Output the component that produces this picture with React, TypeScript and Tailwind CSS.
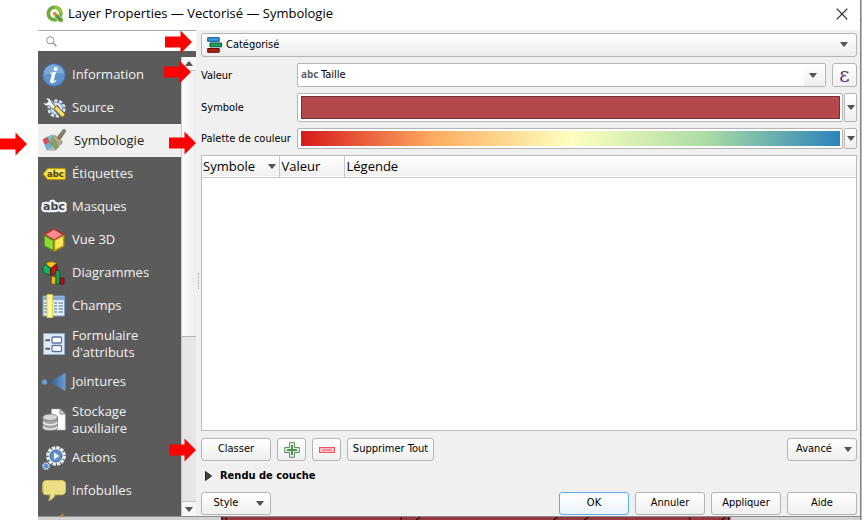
import type { ReactNode } from "react";

const titleFont = "font-['Open_Sans','Noto_Sans',sans-serif]";
const controlFont = "font-['DejaVu_Sans_Condensed','DejaVu_Sans',sans-serif]";
const button =
  "relative flex h-[23px] items-center justify-center rounded-[3px] border border-[#b4b4b4] bg-linear-to-b from-white to-[#efefef] text-[11px] text-black";

function Caret({ className = "" }: { className?: string }) {
  return (
    <svg viewBox="0 0 8 5" className={`pointer-events-none h-[5px] w-2 shrink-0 ${className}`} aria-hidden="true">
      <path d="M0 0h8L4.600 4.600H3.400Z" fill="#555" />
    </svg>
  );
}

function QgisLogo() {
  return (
    <svg viewBox="0 0 18 18" className="h-[18px] w-[18px] shrink-0" aria-hidden="true">
      <circle cx="8.600" cy="8.600" r="6.300" fill="none" stroke="#6fab3b" strokeWidth="3.600" />
      <path d="M8.600 2.300a6.300 6.300 0 0 1 6.300 6.300" fill="none" stroke="#93c23f" strokeWidth="3.600" />
      <path d="m8.500 8.500 3.500.4 5.200 5.400v3h-3.500L8.500 12Z" fill="#5b9f38" stroke="#fff" strokeWidth=".7" />
      <circle cx="8.800" cy="8.800" r="2" fill="#ee8a2d" />
    </svg>
  );
}

const icons: Record<string, ReactNode> = {
  info: (
    <>
      <circle cx="12" cy="12" r="11.200" fill="#5f93cd" stroke="#3d73ae" />
      <path d="M2 12a10 10 0 0 1 20-1c-5-2-12-1-20 1Z" fill="#7fabdb" />
      <circle cx="13.700" cy="5.900" r="2" fill="#fff" />
      <path d="M8.400 10.200c2-.9 3.800-1.100 5.600-1.100l-2.300 8.300c-.2 1 .8.700 2.200-.3l.5.700c-1.700 1.900-3.300 2.500-4.700 2.300-1.500-.2-1.900-1.300-1.500-2.800l1.500-5.500c.2-.7-.3-.9-1.300-.8Z" fill="#fff" />
    </>
  ),
  source: (
    <>
      <circle cx="14.500" cy="12.500" r="7.600" fill="none" stroke="#dfe8f2" strokeWidth="3" strokeDasharray="3.200 1.570" />
      <circle cx="14.500" cy="12.500" r="6.300" fill="#d3e1f1" stroke="#7497c2" />
      <circle cx="14.500" cy="12.500" r="3" fill="#5b5b5b" />
      <path d="M3.500 2.300c3-1.200 6.200.9 6.100 4.200l12 12.300c1 1.200-.8 3.200-2.300 2.100L7 9.700c-2.800 1.200-6-.6-6.100-3.600l3.200 1.200 2.200-2Z" fill="#f4f4f2" stroke="#484848" strokeWidth=".8" />
      <path d="m11.800 12.200 2.800-2.400 8 7.700c1.300 1.600-1.500 4.600-3.200 3.300Z" fill="#f3d34c" stroke="#71602a" />
      <path d="m14.200 12.200 6.700 6.600" stroke="#fff0a0" strokeWidth="1.200" />
    </>
  ),
  brush: (
    <>
      <path d="M.7 10.500 10.300 5.500l3.200 8-8.800 7Z" fill="#d96b78" />
      <path d="m.7 10.500 4.600-2.700 2.300 5-4.800 3.300Z" fill="#cd545e" />
      <path d="m5.300 7.800 5-2.300 2 4.700-4.700 2.600Z" fill="#74c5c0" />
      <path d="m2.800 16.100 4.800-3.300 2.700 4.600-5.600 4.400Z" fill="#6bb0d7" />
      <path d="m7.600 12.800 4.700-2.600 5.400 7.300-4.500 3.700Z" fill="#82bc55" />
      <path d="m10 8.500 8.400 7.300-2.800 4.200c-2.500 2.200-6 2.400-10.400 1.500 2.200-1.500 3.500-3 4.500-5l-3-2.500Z" fill="#8e8872" opacity=".5" />
      <path d="m9.600 8.700 2.800-2.500 7.900 6.500-1.600 3.100Z" fill="#b8ad8c" stroke="#79745f" strokeWidth=".7" />
      <path d="m15.200 8.200 5.700-7.300c1-1.200 3.600.4 2.600 1.900l-5.300 7.600Z" fill="#8b826b" stroke="#696454" strokeWidth=".7" />
    </>
  ),
  label: (
    <>
      <path d="m1 12 4.700-5.600h16.700c.7 0 1 .3 1 1v9.200c0 .7-.3 1-1 1H5.700Z" fill="#f4d93d" stroke="#b89600" />
      <path d="m3 11.500 3.200-3.800H22V11Z" fill="#faea79" />
      <text x="5" y="15" fontFamily="DejaVu Sans" fontWeight="bold" fontSize="8.500" fill="#4c4100">abc</text>
    </>
  ),
  mask: (
    <text x="12" y="15" textAnchor="middle" fontFamily="DejaVu Sans" fontWeight="bold" fontSize="11" fill="#444" stroke="#eef4fc" strokeWidth="4.500" strokeLinejoin="round" paintOrder="stroke">abc</text>
  ),
  cube: (
    <>
      <path d="m12 .8 10 5.800v11.700L12 23.400 2 18.300V6.600Z" fill="#f6df42" stroke="#7d6b17" />
      <path d="m12 1 9.600 5.700L12 12 2.400 6.700Z" fill="#f78b8e" stroke="#b7272c" strokeWidth="1.400" />
      <path d="M2.300 7.400 11.400 12.500v10L2.300 17.800Z" fill="#8fdb35" stroke="#4b9617" strokeWidth="1.200" />
      <path d="m12.600 12.600 9-5v10.300l-9 4.700Z" fill="#fae757" stroke="#b49a16" strokeWidth="1.200" />
    </>
  ),
  chart: (
    <>
      <path d="M9 7 3.800 3.100C5.500.4 11.700-.1 14.500 2.500Z" fill="#fac719" stroke="#7c620c" strokeWidth=".8" />
      <path d="m8.500 7.400-5-4C.5 5.600.2 9.700 2.300 12.300L8.600 14Z" fill="#18ad60" stroke="#096134" />
      <path d="m9 8 5.200-4.700c2.300 4.100.6 8.500-3.100 10.500l-2.500.2Z" fill="#c8161d" stroke="#650a0d" />
      <path d="M9.500 15.700h4.300V23H9.500Z" fill="#fbb61c" stroke="#8a5a00" strokeWidth=".8" />
      <path d="M14 9.600h3.800V23H14Z" fill="#12a85a" stroke="#07562e" strokeWidth=".8" />
      <path d="M18 17.200h4V23h-4Z" fill="#bd1014" stroke="#5d080a" strokeWidth=".8" />
    </>
  ),
  fields: (
    <>
      <path d="M1 2h21.500v20H1Z" fill="#e9eff7" stroke="#7d9ec5" />
      <path d="M1.500 2.500H22v3.700H1.500Z" fill="#83a9d5" />
      <path d="M2 9h3m-3 3h3m-3 3h3m-3 3h3M12 9h3m1.500 0H21m-9 3h3m1.500 0H21m-9 3h3m1.500 0H21m-9 3h3m1.500 0H21" stroke="#789bc3" strokeWidth="1.300" />
      <path d="M5 .7h5.500v22.800H5Z" fill="#fff8a2" stroke="#e3cf38" />
      <circle cx="7.700" cy="4.300" r="1" fill="#fff" stroke="#cfc56c" strokeWidth=".5" />
    </>
  ),
  form: (
    <>
      <path d="M1.500 1.500h21v21h-21Z" fill="#e1e9f3" stroke="#8ba7ca" />
      <path d="M3.300 8.300H8m-4.700 8.500H8" stroke="#49617e" strokeWidth="2" />
      <rect x="10" y="5" width="9.500" height="6" rx="1" fill="#fff" stroke="#5877a0" strokeWidth="1.300" />
      <rect x="10" y="13.500" width="9.500" height="6" rx="1" fill="#fff" stroke="#5877a0" strokeWidth="1.300" />
    </>
  ),
  join: (
    <>
      <defs>
        <linearGradient id="joinFill">
          <stop stopColor="#2f5f93" />
          <stop offset="1" stopColor="#6b9bd0" />
        </linearGradient>
      </defs>
      <circle cx="2.500" cy="12" r="2.600" fill="#6e9dcf" />
      <path d="M8 12 23.500 2.700v18.600Z" fill="url(#joinFill)" />
    </>
  ),
  storage: (
    <>
      <path d="M9.500 1h9l4.800 4.700V22h-13.800Z" fill="#fcfcfc" stroke="#aaa" strokeWidth=".5" />
      <path d="M18 1v5h5.200Z" fill="#ddd" stroke="#777" strokeWidth=".8" />
      <path d="M.7 9.300v10.500c0 4.200 14.800 4.200 14.800 0V9.300Z" fill="#a5a5a5" stroke="#686868" strokeWidth=".8" />
      <path d="M1.200 14c1 3.600 13 3.600 14 0M1.200 18.500c1 3.600 13 3.600 14 0" fill="none" stroke="#ececec" strokeWidth="1.500" />
      <ellipse cx="8.100" cy="9.300" rx="7.400" ry="3.200" fill="#d9d9d9" stroke="#777" strokeWidth=".8" />
    </>
  ),
  actions: (
    <>
      <circle cx="14" cy="10" r="8.300" fill="none" stroke="#e8edf2" strokeWidth="3.200" strokeDasharray="3.250 1.100" />
      <circle cx="14" cy="10" r="7.400" fill="#e8edf2" />
      <circle cx="14" cy="10" r="6" fill="#5d8fc8" stroke="#38689f" />
      <path d="m12 6.500 5.200 3.500-5.200 3.500Z" fill="#fff" />
      <circle cx="4" cy="20.200" r="3" fill="#5f91cb" stroke="#b7cee8" strokeWidth="1.800" strokeDasharray="1.700 .65" />
    </>
  ),
  bubble: (
    <path d="M4.500 1.500h15c2.500 0 4 1.300 4 3.500v7c0 2.300-1.500 3.700-4 3.700h-6.600c-.6 3-3 5-6.300 5.700 1.400-1.800 1.700-3.700 1.300-5.700H4.500C2 15.700.8 14.300.8 12V5c0-2.200 1.200-3.500 3.700-3.500Z" fill="#eadf83" stroke="#cfc15b" />
  ),
  render: <path d="m14 6 8-4.500-3 7Z" fill="#f0a13c" stroke="#b96d16" />,
};

const items = [
  { icon: "info", text: "Information" },
  { icon: "source", text: "Source" },
  { icon: "brush", text: "Symbologie" },
  { icon: "label", text: "Étiquettes" },
  { icon: "mask", text: "Masques" },
  { icon: "cube", text: "Vue 3D" },
  { icon: "chart", text: "Diagrammes" },
  { icon: "fields", text: "Champs" },
  { icon: "form", text: "Formulaire d'attributs", tall: true },
  { icon: "join", text: "Jointures" },
  { icon: "storage", text: "Stockage auxiliaire", tall: true },
  { icon: "actions", text: "Actions" },
  { icon: "bubble", text: "Infobulles" },
  { icon: "render", text: "" },
];

function Sidebar() {
  return (
    <aside className="flex w-[158px] shrink-0 flex-col bg-[#5b5b5b]">
      <label className="flex h-[21px] shrink-0 items-center border-t border-[#a8a8a8] bg-white pl-2">
        <svg viewBox="0 0 12 12" className="h-[11px] w-[11px] shrink-0" aria-hidden="true">
          <circle cx="4.700" cy="4.700" r="3.900" fill="none" stroke="#8a8a8a" />
          <path d="m7.600 7.600 3.800 3.800" stroke="#777" strokeWidth="1.200" />
        </svg>
        <input type="search" aria-label="Rechercher" className="h-full w-full min-w-0 bg-transparent px-1 text-[11px] outline-none" />
      </label>
      <div className="mt-[6px] flex min-h-0 flex-1">
        <nav className="flex min-w-0 flex-1 flex-col overflow-hidden pt-px">
          {items.map((item) => {
            const selected = item.icon === "brush";
            return (
              <button
                key={item.icon}
                aria-label={item.text || "Rendu"}
                aria-current={selected ? "page" : undefined}
                className={`flex shrink-0 items-center pl-1 text-left text-[13px] ${item.tall ? "h-[43px]" : "h-[33px]"} ${
                  selected ? "gap-2 bg-[#f0f0f0] text-[#222]" : "gap-[6px] text-[#f2f2f2]"
                }`}
              >
                <svg viewBox="0 0 24 24" className="h-6 w-6 shrink-0 overflow-visible" aria-hidden="true">
                  {icons[item.icon]}
                </svg>
                <span className="w-[80px] leading-[17px]">{item.text}</span>
              </button>
            );
          })}
        </nav>
        <div className="flex w-[15px] shrink-0 flex-col border-l border-[#c8c8c8] bg-[#e6e6e6]">
          <div className="flex h-[14px] shrink-0 items-center justify-center border-b border-[#c4c4c4] bg-[#f7f7f7]">
            <Caret className="rotate-180" />
          </div>
          <div className="basis-[58%] border-b border-[#b8b8b8] bg-linear-to-r from-white to-[#ededed]" />
          <div className="mt-auto flex h-[15px] shrink-0 items-center justify-center border-t border-[#c4c4c4] bg-[#f7f7f7]">
            <Caret />
          </div>
        </div>
      </div>
    </aside>
  );
}

function MenuArrow({ label }: { label: string }) {
  return (
    <button aria-label={label} className="flex h-full w-[13px] shrink-0 items-center justify-center rounded-[2px] border border-[#b4b4b4] bg-linear-to-b from-white to-[#efefef]">
      <Caret />
    </button>
  );
}

function RedArrow({ className }: { className: string }) {
  return (
    <svg viewBox="0 0 27 24" className={`pointer-events-none absolute h-6 w-[27px] ${className}`} aria-hidden="true">
      <path d="M0 6.500h15.500V.5L27 12 15.500 23.500v-6H0Z" fill="#fe0000" />
    </svg>
  );
}

function Symbology() {
  return (
    <main className={`relative flex min-w-0 flex-1 flex-col pt-[3px] pr-[3px] pb-px pl-[5px] text-[11px] text-black ${controlFont}`}>
      <div className="absolute top-1/2 left-[2px] h-4 border-l border-dotted border-[#aaa]" />
      <div className="relative h-[24px] shrink-0">
        <select aria-label="Type de rendu" className="h-full w-full appearance-none rounded-[3px] border border-[#b4b4b4] bg-linear-to-b from-white to-[#ececec] pl-6">
          <option>Catégorisé</option>
        </select>
        <svg viewBox="0 0 15 16" className="pointer-events-none absolute top-1 left-[6px] h-4 w-[15px]" aria-hidden="true">
          <path d="M.7.7h11.500v3.600H.7Z" fill="#3aa0dc" stroke="#0d4d93" />
          <path d="M3 6h11.500v3.800H3Z" fill="#13a865" stroke="#09522e" />
          <path d="M.7 11.500h11.500v3.800H.7Z" fill="#b41d12" stroke="#5f0b07" />
        </svg>
        <Caret className="absolute top-[9px] right-[9px]" />
      </div>

      <div className="mt-[6px] grid shrink-0 grid-cols-[96px_minmax(0,1fr)] grid-rows-[24px_29px_21px] items-center gap-y-[6px]">
        <label htmlFor="valeur" className="pt-[2px]">Valeur</label>
        <div className="flex h-full gap-[6px]">
          <div className="relative min-w-0 flex-1">
            <select id="valeur" className="h-full w-full appearance-none rounded-[2px] border border-[#b4b4b4] bg-white pl-[23px]">
              <option>Taille</option>
            </select>
            <span className="pointer-events-none absolute top-1 left-1 font-['Noto_Sans',sans-serif] text-[10px] font-bold text-[#666]">abc</span>
            <span className="pointer-events-none absolute top-px right-px flex h-[22px] w-[21px] items-center justify-start bg-linear-to-b from-white to-[#efefef] pl-[5px]">
              <Caret />
            </span>
          </div>
          <button aria-label="Expression" className={`${button} h-[24px]! w-[25px] shrink-0`}>
            <span className="font-['DejaVu_Serif',serif] text-[20px] leading-5 text-[#643b70]">ε</span>
          </button>
        </div>

        <span className="pt-[2px]">Symbole</span>
        <div className="flex h-full gap-px">
          <button aria-label="Symbole" className="min-w-0 flex-1 rounded-[2px] border border-[#b4b4b4] bg-white py-[2px] pr-[2px] pl-[3px]">
            <span className="block h-full w-full border border-[#6c3338] bg-[#b5484b]" />
          </button>
          <MenuArrow label="Menu symbole" />
        </div>

        <span className="pt-[2px] whitespace-nowrap">Palette de couleur</span>
        <div className="flex h-full gap-px">
          <button aria-label="Palette de couleur" className="min-w-0 flex-1 rounded-[2px] border border-[#b4b4b4] bg-white py-[2px] pr-[2px] pl-[3px]">
            <span className="block h-full w-full bg-[linear-gradient(to_right,#d7191c_0%,#fdae61_25%,#ffffc0_50%,#abdda4_75%,#2b83ba_100%)]" />
          </button>
          <MenuArrow label="Menu palette" />
        </div>
      </div>

      <div className={`mt-[6px] min-h-0 flex-1 border border-[#bcbcbc] bg-white ${titleFont}`}>
        <table className="w-full table-fixed border-collapse text-left text-[13px] leading-5">
          <thead>
            <tr className="h-[21px] border-b border-[#c8c8c8] bg-linear-to-b from-white to-[#f0f0f0]">
              <th className="w-[77px] border-r border-[#c8c8c8] p-0 pl-px font-normal">
                <span className="flex items-center justify-between pr-[3px]">
                  Symbole <Caret />
                </span>
              </th>
              <th className="w-[65px] border-r border-[#c8c8c8] p-0 pl-[2px] font-normal">Valeur</th>
              <th className="p-0 pl-[2px] font-normal">Légende</th>
            </tr>
          </thead>
          <tbody />
        </table>
      </div>

      <div className="mt-[7px] flex shrink-0 gap-[6px]">
        <button className={`${button} w-[70px]`}>Classer</button>
        <button aria-label="Ajouter" className={`${button} w-[29px]`}>
          <svg viewBox="0 0 16 16" className="h-4 w-4" aria-hidden="true">
            <path d="M5.500.7h5v4.800h4.800v5h-4.800v4.800h-5v-4.800H.7v-5h4.800Z" fill="#e3f0e2" stroke="#56905a" />
            <path d="M8 3v10M3 8h10" stroke="#4f8e54" strokeWidth="2" />
          </svg>
        </button>
        <button aria-label="Supprimer" className={`${button} w-[29px]`}>
          <svg viewBox="0 0 16 6" className="h-[6px] w-4" aria-hidden="true">
            <path d="M.6.600h14.800v4.800H.6Z" fill="#ffe2e2" stroke="#e9575d" strokeWidth="1.200" />
            <path d="M3 3h10" stroke="#e9575d" strokeWidth="1.200" />
          </svg>
        </button>
        <button className={`${button} w-[87px] whitespace-nowrap`}>Supprimer Tout</button>
        <button className={`${button} ml-auto w-[70px] gap-3 pl-1`}>
          Avancé <Caret />
        </button>
      </div>

      <button className="mt-[6px] flex h-[18px] shrink-0 items-center gap-2 self-start pl-1 text-[11px] font-bold">
        <svg viewBox="0 0 7 10" className="h-[10px] w-[7px]" aria-hidden="true">
          <path d="M.5.5 6.500 5 .5 9.500Z" fill="#444" stroke="#222" />
        </svg>
        Rendu de couche
      </button>

      <div className="mt-[7px] flex shrink-0 gap-[6px]">
        <button className={`${button} mr-auto w-[70px] gap-[18px] pl-[6px]`}>
          Style <Caret />
        </button>
        <button className={`${button} w-[70px] border-[#5aaeea]! to-[#eaf4fc]!`}>OK</button>
        <button className={`${button} w-[70px]`}>Annuler</button>
        <button className={`${button} w-[70px]`}>Appliquer</button>
        <button className={`${button} w-[70px]`}>Aide</button>
      </div>
    </main>
  );
}

export default function App() {
  return (
    <div className={`relative flex h-screen min-h-[520px] w-full overflow-hidden bg-white pl-[38px] ${titleFont}`}>
      <div className="flex min-w-0 flex-1 flex-col">
        <header className="flex h-[30px] shrink-0 items-center bg-white pr-3 pb-[2px] pl-[8px]">
          <QgisLogo />
          <h1 className="ml-1 text-[13px] whitespace-nowrap text-black">Layer Properties — Vectorisé — Symbologie</h1>
          <button aria-label="Fermer" className="ml-auto">
            <svg viewBox="0 0 12 12" className="h-3 w-3" aria-hidden="true">
              <path d="m.7.7 10.600 10.600M11.300.7.7 11.300" stroke="#222" strokeWidth="1.200" />
            </svg>
          </button>
        </header>
        <div className="flex min-h-0 flex-1 bg-[#f0f0f0]">
          <Sidebar />
          <Symbology />
        </div>
        <div className="flex h-1 shrink-0 border-t border-[#8c8c8c] bg-[#d2d2d2]">
          <svg viewBox="0 0 512 3" preserveAspectRatio="none" className="ml-[183px] h-[3px] w-[62%]" aria-hidden="true">
            <path d="M0 0h512v3H0Z" fill="#96363f" />
            <path d="M1 0v3M5 0v3M181 0v3M196 3l4-3M334 3l4-3M365 3l4-3M471 0v3M503 3l4-3M510 0v3" stroke="#2b1114" strokeWidth="1.300" />
          </svg>
        </div>
      </div>
      <div className="flex w-[2px] shrink-0 flex-col border-l border-[#858585] bg-[#b9b9b9]">
        <div className="h-[21px] border-b border-[#777]" />
        <div className="h-[34px] border-b border-[#777]" />
      </div>

      <RedArrow className="top-[30px] left-[165px]" />
      <RedArrow className="top-[60px] left-[164px]" />
      <RedArrow className="top-[132px] left-0" />
      <RedArrow className="top-[131px] left-[169px]" />
      <RedArrow className="top-[438px] left-[169px]" />
    </div>
  );
}
